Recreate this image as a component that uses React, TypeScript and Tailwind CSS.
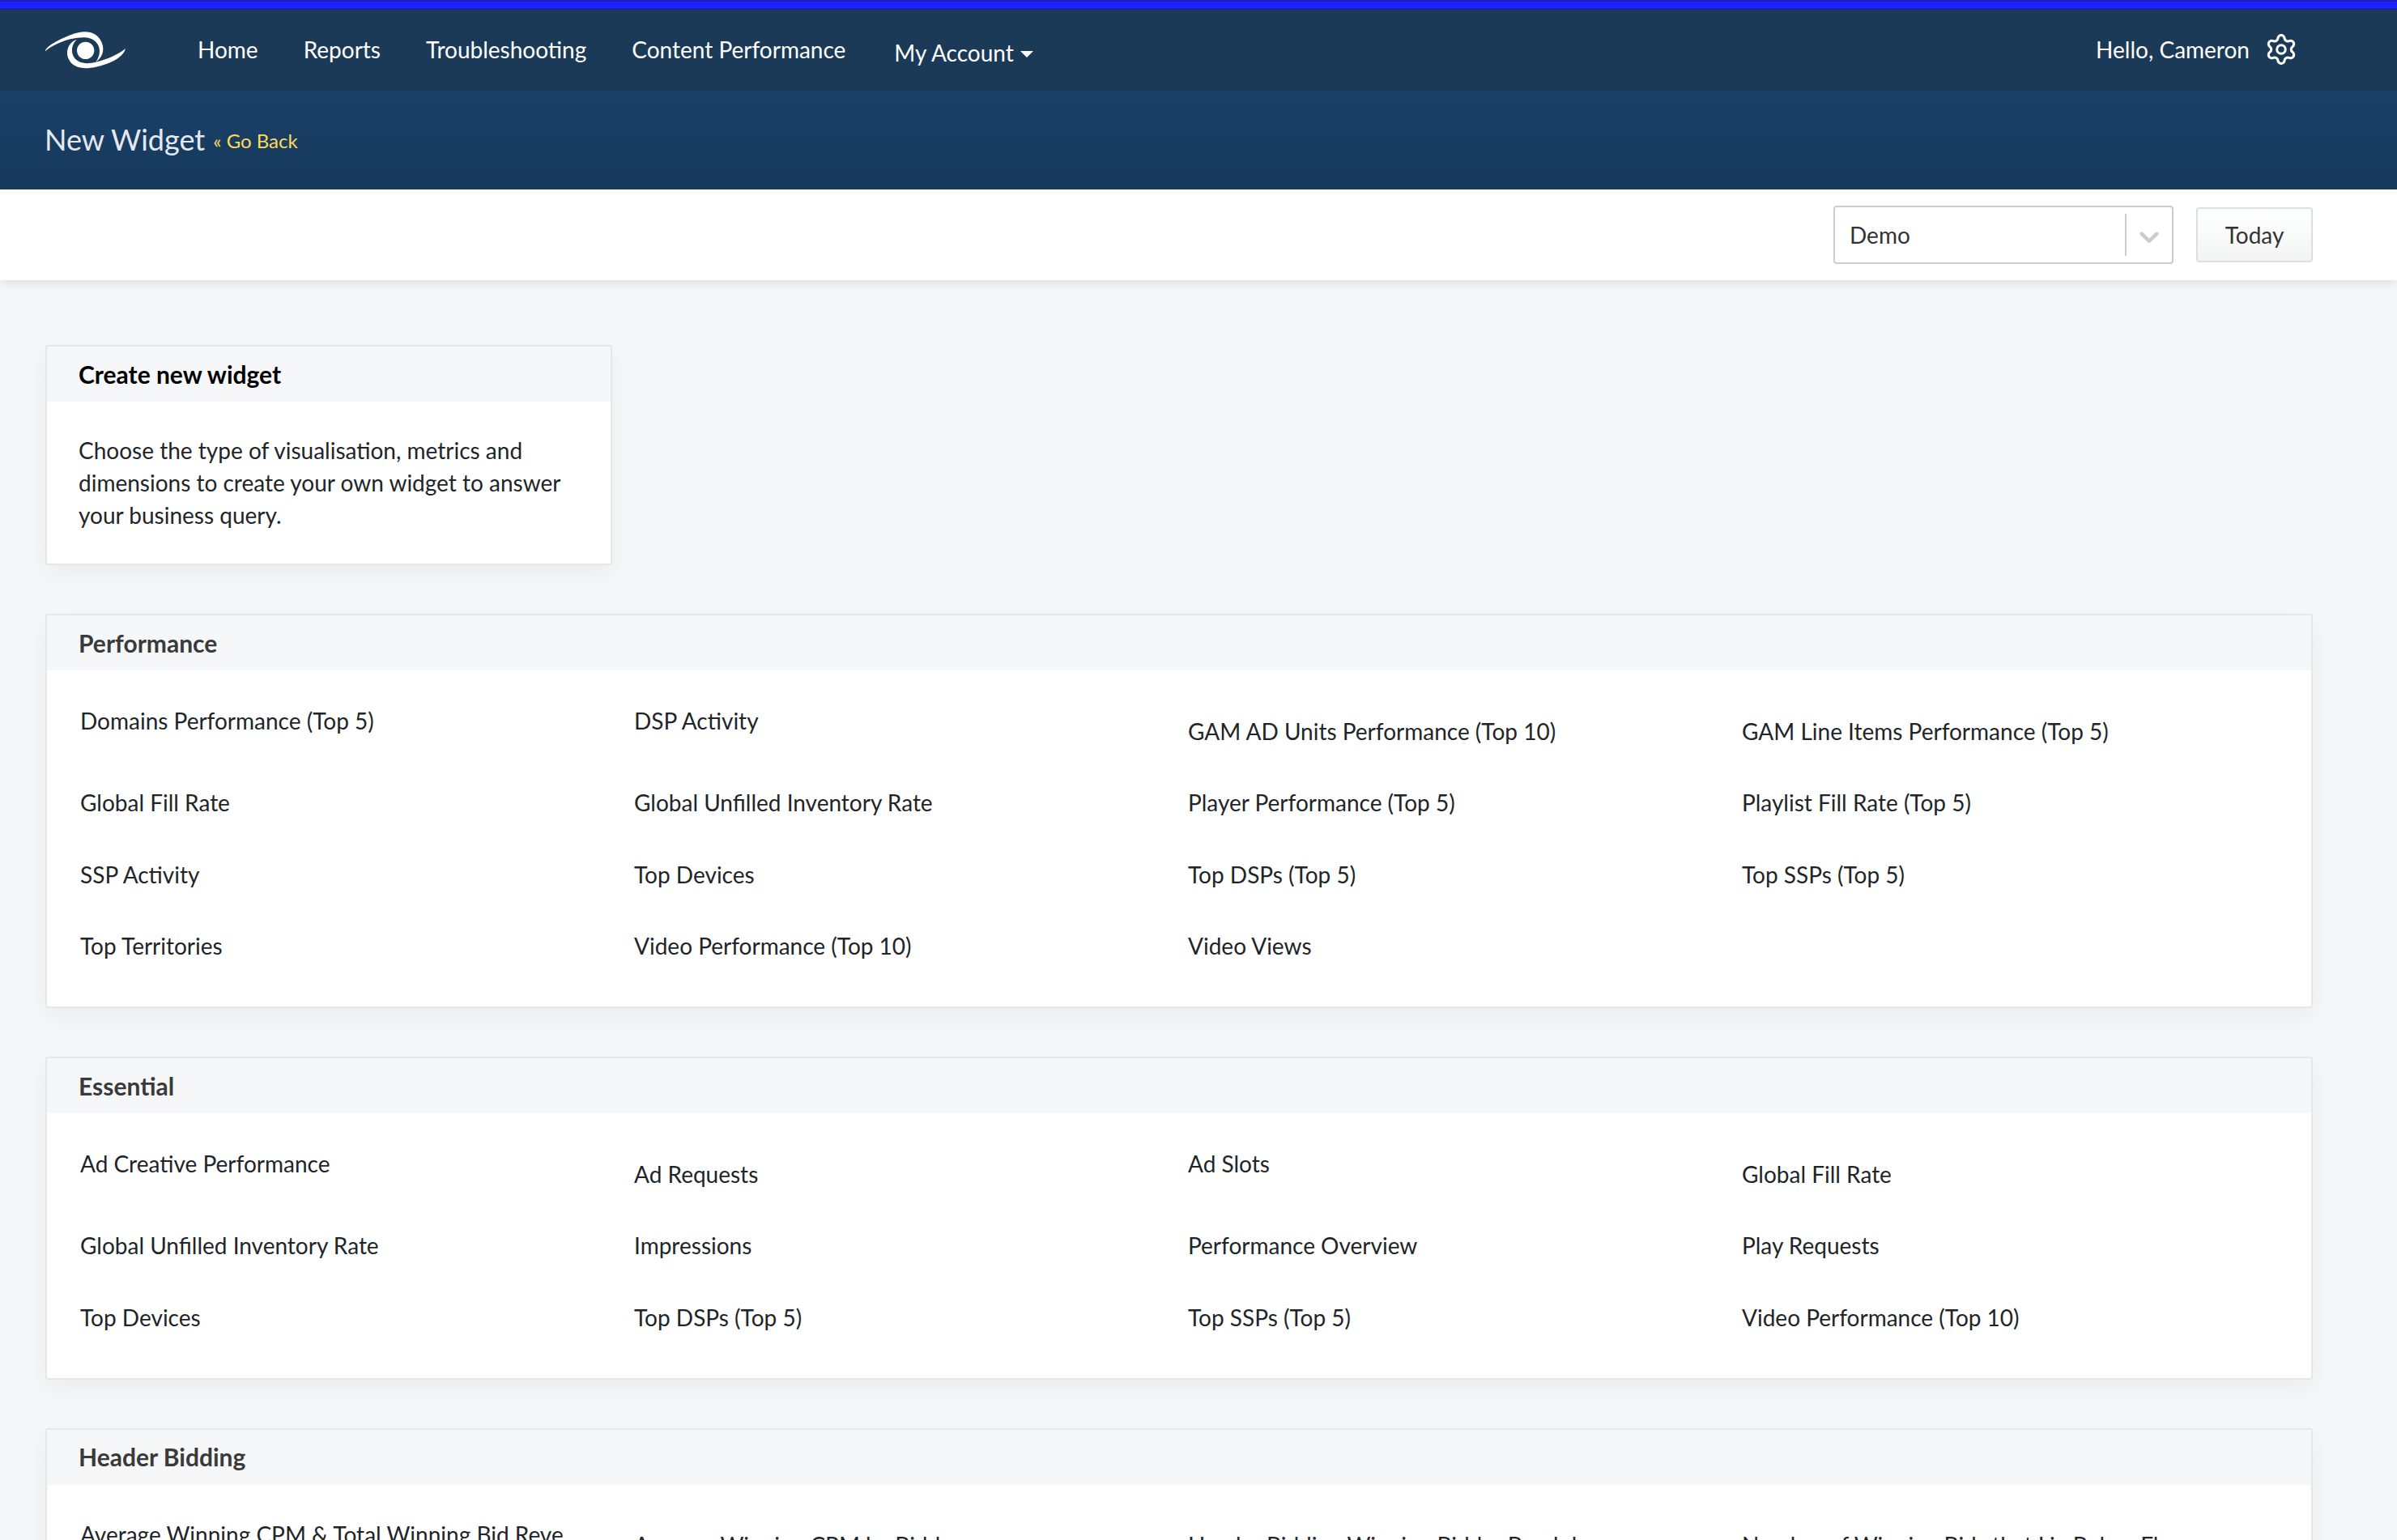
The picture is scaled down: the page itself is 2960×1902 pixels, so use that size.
import { Settings } from "lucide-react";

const font = "font-['Lato','Noto_Sans',sans-serif]";

type Item = { t: string; o?: boolean };

function Row({ items }: { items: Item[] }) {
  return (
    <div className="grid grid-cols-[684px_684px_684px_684px]">
      {items.map((it, i) => (
        <div key={i} className={`pl-[11px] pr-3 pt-[24.5px] pb-6 leading-10 whitespace-nowrap text-[#212529] ${it.o ? "mt-[13px]" : ""}`}>
          {it.t}
        </div>
      ))}
    </div>
  );
}

function Section({ title, rows }: { title: string; rows: Item[][] }) {
  return (
    <section className="mt-[60px] bg-white border-2 border-[#e5e7e9] rounded-[3px] shadow-[0_10px_30px_rgba(0,0,0,0.05)]">
      <div className="h-[68px] bg-[#f6f7f9] pl-[39px] flex items-center font-bold text-[30px] text-[#3a3a3a]">{title}</div>
      <div className="pl-[30px] pt-[17px] pb-[31px]">
        {rows.map((r, i) => (
          <Row key={i} items={r} />
        ))}
      </div>
    </section>
  );
}

const performance: Item[][] = [
  [{ t: "Domains Performance (Top 5)" }, { t: "DSP Activity" }, { t: "GAM AD Units Performance (Top 10)", o: true }, { t: "GAM Line Items Performance (Top 5)", o: true }],
  [{ t: "Global Fill Rate" }, { t: "Global Unfilled Inventory Rate" }, { t: "Player Performance (Top 5)" }, { t: "Playlist Fill Rate (Top 5)" }],
  [{ t: "SSP Activity" }, { t: "Top Devices" }, { t: "Top DSPs (Top 5)" }, { t: "Top SSPs (Top 5)" }],
  [{ t: "Top Territories" }, { t: "Video Performance (Top 10)" }, { t: "Video Views" }],
];

const essential: Item[][] = [
  [{ t: "Ad Creative Performance" }, { t: "Ad Requests", o: true }, { t: "Ad Slots" }, { t: "Global Fill Rate", o: true }],
  [{ t: "Global Unfilled Inventory Rate" }, { t: "Impressions" }, { t: "Performance Overview" }, { t: "Play Requests" }],
  [{ t: "Top Devices" }, { t: "Top DSPs (Top 5)" }, { t: "Top SSPs (Top 5)" }, { t: "Video Performance (Top 10)" }],
];

const bidding: Item[][] = [
  [
    { t: "Average Winning CPM & Total Winning Bid Reve" },
    { t: "Average Winning CPM by Bidd", o: true },
    { t: "Header Bidding Winning Bidder Breakd", o: true },
    { t: "Number of Winning Bids that Lie Below Fl", o: true },
  ],
];

export default function App() {
  return (
    <div className={`${font} text-[28px] h-[1902px] overflow-hidden bg-[#f6f7f9] text-[#212529]`}>
      <div className="h-3 bg-[#1a23ff] border-y-2 border-[#1c1fb4]" />
      <nav className="h-[100px] bg-[#1b3a57] flex items-center pl-[54px] pr-[122px] text-white">
        <svg width="150" height="80" viewBox="0 0 450 240" className="-ml-6 mr-[64px] -mt-1" fill="#fff">
          <path d="M78 130C78 112 130 85 175 68C215 52 260 52 280 85C300 115 295 150 265 170C282 145 285 115 265 95C245 75 215 75 170 85C135 95 100 110 78 130Z" />
          <path d="M195 86C165 95 150 130 165 160C180 192 220 198 265 188C315 178 365 155 375 120C350 140 310 160 265 170C235 178 195 178 180 145C172 120 180 100 195 86Z" />
          <circle cx="227" cy="127" r="32" />
        </svg>
        <a className="mr-14 -mt-0.5">Home</a>
        <a className="mr-14 -mt-0.5">Reports</a>
        <a className="mr-14 -mt-0.5">Troubleshooting</a>
        <a className="mr-[60px] -mt-0.5">Content Performance</a>
        <a className="flex items-center gap-2 mt-1.5">
          My Account
          <span className="mt-1 border-t-[8px] border-x-[8px] border-x-transparent border-t-white" />
        </a>
        <div className="ml-auto flex items-center gap-[18px] -mt-0.5">
          <span>Hello, Cameron</span>
          <Settings size={42} strokeWidth={1.75} />
        </div>
      </nav>
      <header className="h-[122px] bg-gradient-to-b from-[#1a3f68] to-[#173a5c] flex items-center pl-[55px] pb-0.5">
        <h1 className="text-[36px] text-[#e4e9f0] leading-none">New Widget</h1>
        <a className="ml-2.5 text-[24px] text-[#ffdb58] mt-1">« Go Back</a>
      </header>
      <div className="h-[112px] bg-white shadow-[0_4px_14px_rgba(0,0,0,0.1)] flex items-center justify-end pr-[104px] relative">
        <div className="w-[420px] h-[72px] border-2 border-[#ccc] rounded-[4px] flex items-center pl-[18px]">
          <span className="flex-1 text-[#333]">Demo</span>
          <span className="w-0.5 h-[52px] bg-[#ccc]" />
          <svg width="40" height="40" viewBox="0 0 20 20" fill="#ccc" className="mx-2 mt-1">
            <path d="M4.516 7.548c0.436-0.446 1.043-0.481 1.576 0l3.908 3.747 3.908-3.747c0.533-0.481 1.141-0.446 1.574 0 0.436 0.445 0.408 1.197 0 1.615-0.406 0.418-4.695 4.502-4.695 4.502-0.217 0.223-0.502 0.335-0.787 0.335s-0.57-0.112-0.789-0.335c0 0-4.287-4.084-4.695-4.502s-0.436-1.17 0-1.615z" />
          </svg>
        </div>
        <button className="ml-7 w-[144px] h-[68px] border-2 border-[#dcdfe0] rounded-[4px] bg-gradient-to-b from-white to-[#f3f5f5] text-[#333]">Today</button>
      </div>
      <main className="pl-14 pr-[104px] pt-20">
        <div className="w-[700px] h-[272px] bg-white border-2 border-[#e5e7e9] rounded-[3px] shadow-[0_10px_30px_rgba(0,0,0,0.05)]">
          <div className="h-[68px] bg-[#f6f7f9] pl-[39px] flex items-center font-bold text-[30px] text-black">Create new widget</div>
          <p className="pl-[39px] pr-8 pt-10 leading-10 text-[#212529]">
            Choose the type of visualisation, metrics and dimensions to create your own widget to answer your business query.
          </p>
        </div>
        <Section title="Performance" rows={performance} />
        <Section title="Essential" rows={essential} />
        <Section title="Header Bidding" rows={bidding} />
      </main>
    </div>
  );
}
